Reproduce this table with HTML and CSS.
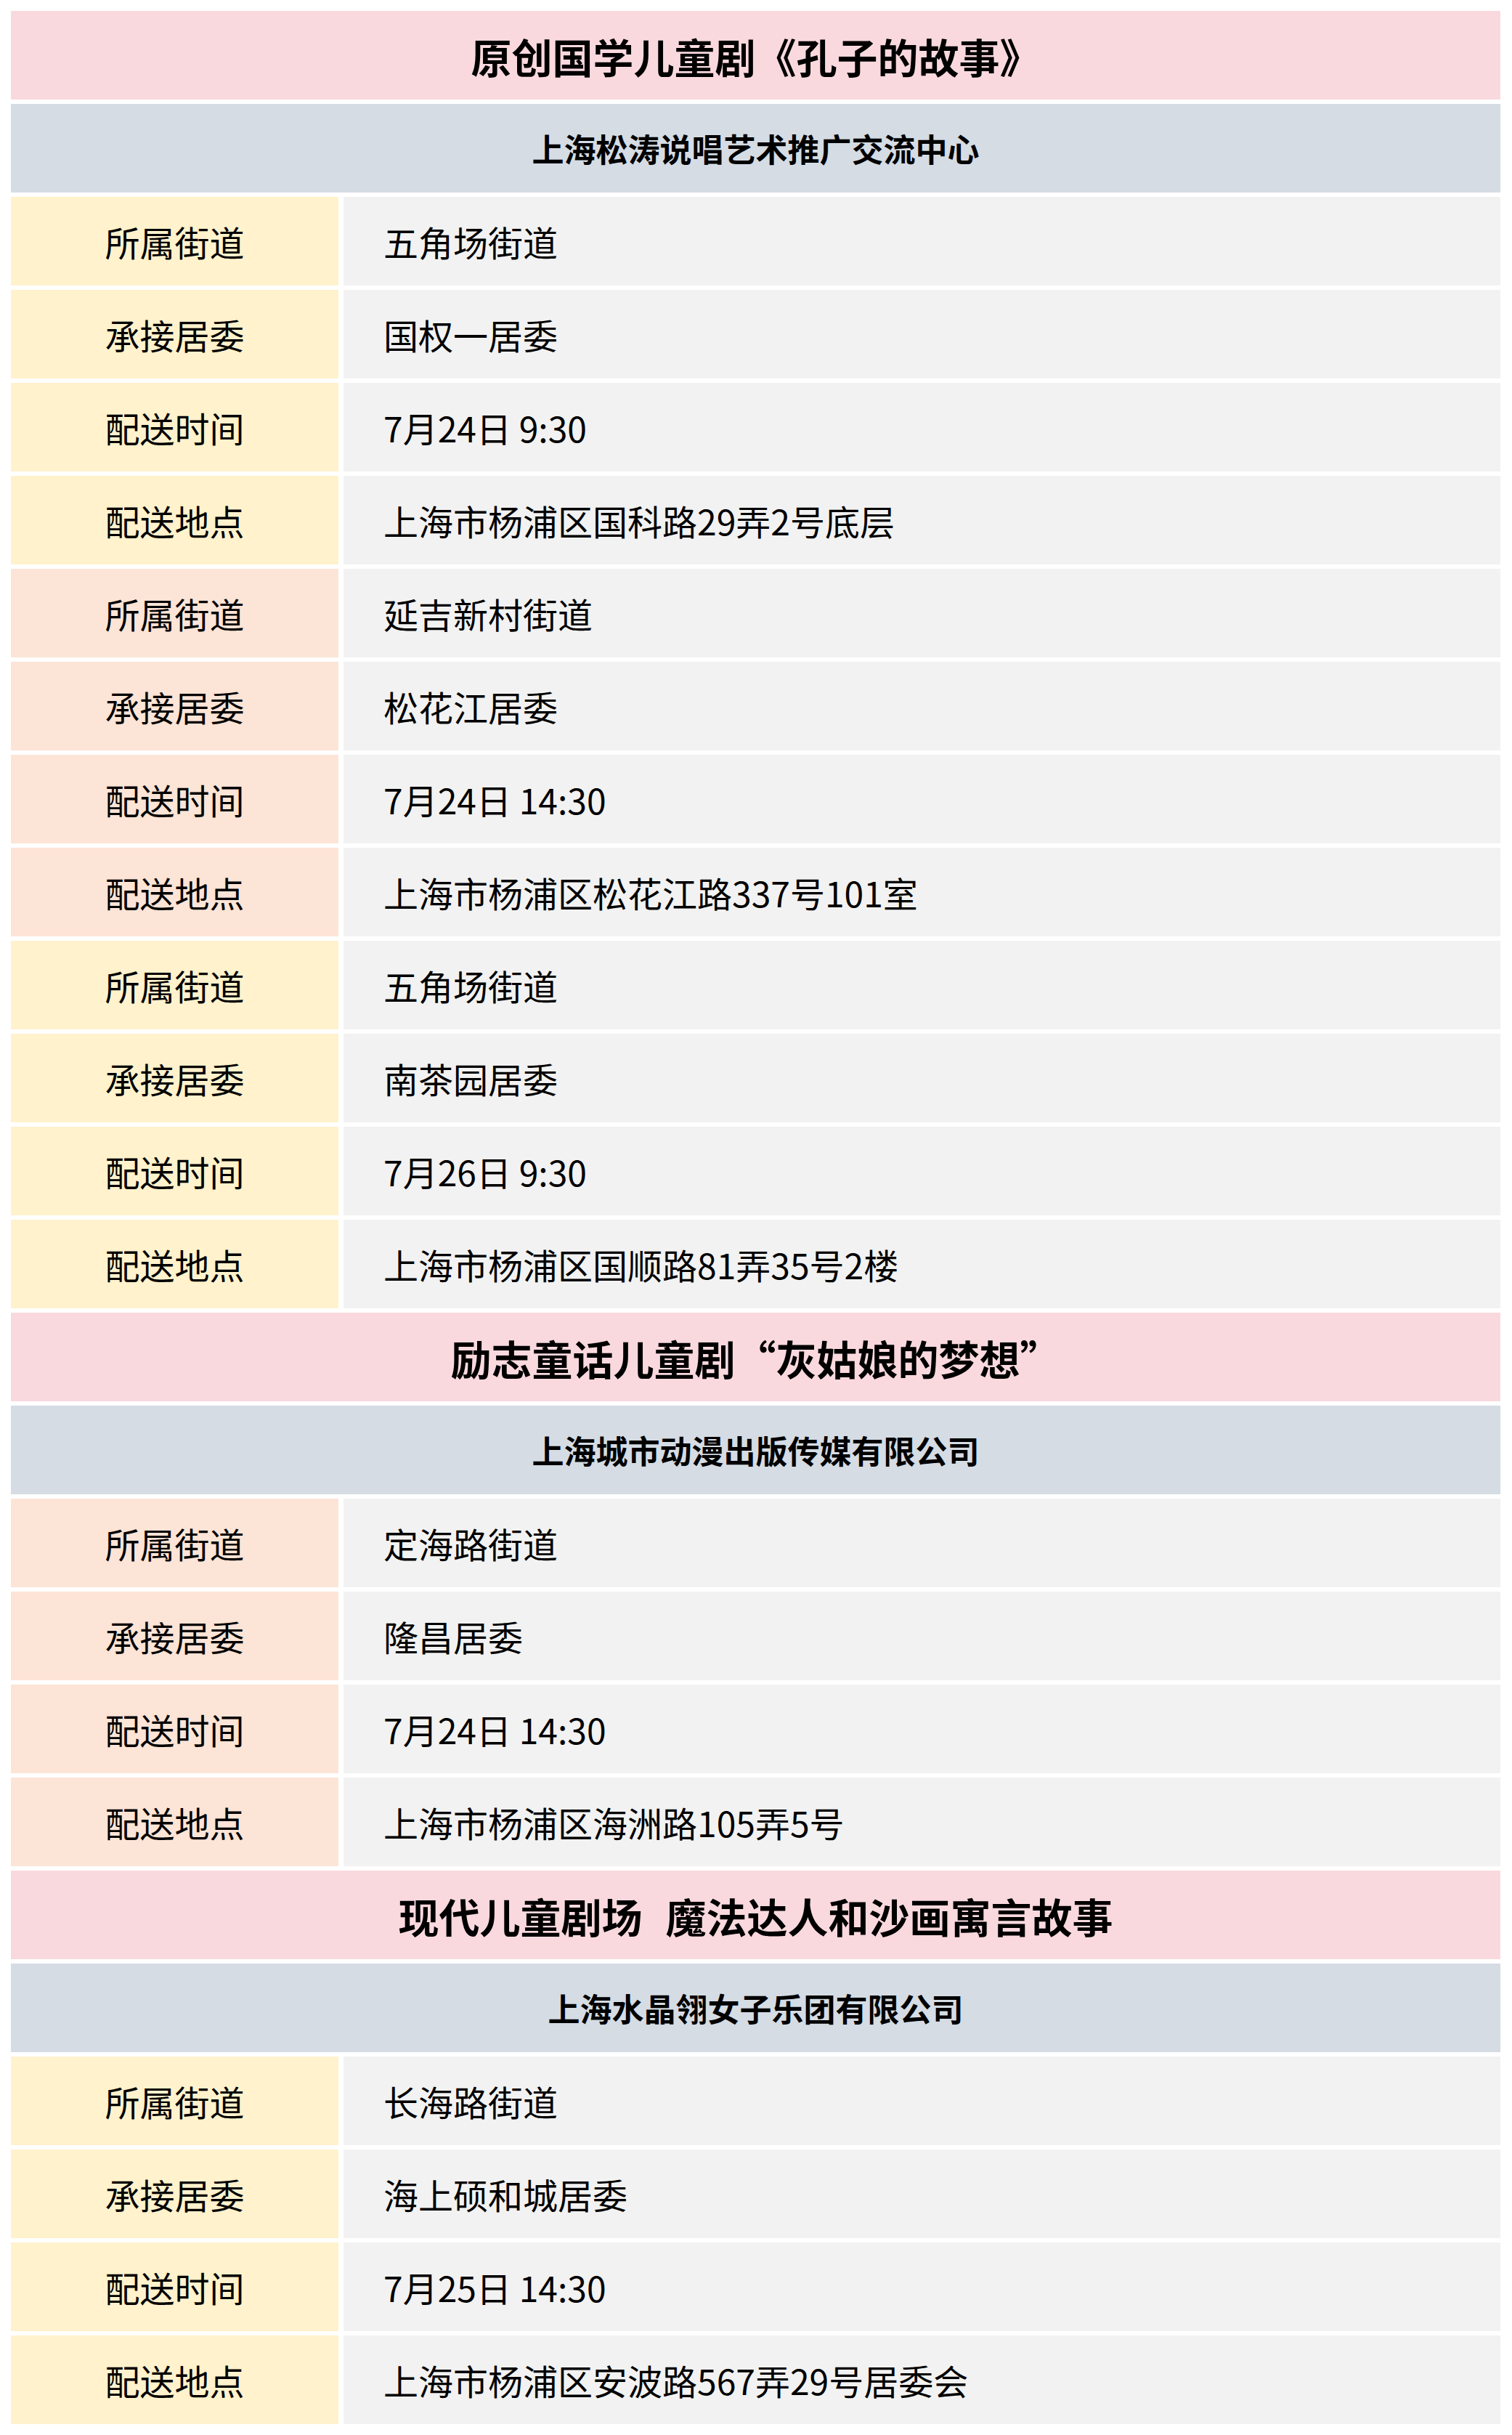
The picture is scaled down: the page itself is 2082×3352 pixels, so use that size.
FILE: index.html
```html
<!DOCTYPE html>
<html lang="zh-CN">
<head>
<meta charset="utf-8">
<title>配送表</title>
<link rel="stylesheet" href="styles.css">
</head>
<body>
<div class="sheet">
  <div class="title span">原创国学儿童剧《孔子的故事》</div>
  <div class="org span">上海松涛说唱艺术推广交流中心</div>

  <div class="label yellow">所属街道</div><div class="value">五角场街道</div>
  <div class="label yellow">承接居委</div><div class="value">国权一居委</div>
  <div class="label yellow">配送时间</div><div class="value">7月24日 9:30</div>
  <div class="label yellow">配送地点</div><div class="value">上海市杨浦区国科路29弄2号底层</div>

  <div class="label peach">所属街道</div><div class="value">延吉新村街道</div>
  <div class="label peach">承接居委</div><div class="value">松花江居委</div>
  <div class="label peach">配送时间</div><div class="value">7月24日 14:30</div>
  <div class="label peach">配送地点</div><div class="value">上海市杨浦区松花江路337号101室</div>

  <div class="label yellow">所属街道</div><div class="value">五角场街道</div>
  <div class="label yellow">承接居委</div><div class="value">南茶园居委</div>
  <div class="label yellow">配送时间</div><div class="value">7月26日 9:30</div>
  <div class="label yellow">配送地点</div><div class="value">上海市杨浦区国顺路81弄35号2楼</div>

  <div class="title span">励志童话儿童剧“灰姑娘的梦想”</div>
  <div class="org span">上海城市动漫出版传媒有限公司</div>

  <div class="label peach">所属街道</div><div class="value">定海路街道</div>
  <div class="label peach">承接居委</div><div class="value">隆昌居委</div>
  <div class="label peach">配送时间</div><div class="value">7月24日 14:30</div>
  <div class="label peach">配送地点</div><div class="value">上海市杨浦区海洲路105弄5号</div>

  <div class="title span">现代儿童剧场<span class="gap"></span>魔法达人和沙画寓言故事</div>
  <div class="org span">上海水晶翎女子乐团有限公司</div>

  <div class="label yellow">所属街道</div><div class="value">长海路街道</div>
  <div class="label yellow">承接居委</div><div class="value">海上硕和城居委</div>
  <div class="label yellow">配送时间</div><div class="value">7月25日 14:30</div>
  <div class="label yellow">配送地点</div><div class="value">上海市杨浦区安波路567弄29号居委会</div>
</div>
</body>
</html>
```

FILE: styles.css
```css
html, body {
  margin: 0;
  padding: 0;
  background: #ffffff;
}

body {
  font-family: "Noto Sans CJK SC", "Noto Sans", sans-serif;
  color: #000000;
}

.sheet {
  display: grid;
  grid-template-columns: 451px 1fr;
  grid-auto-rows: 122px;
  column-gap: 7px;
  row-gap: 6px;
  padding: 15px 16px 15px 15px;
}

.span {
  grid-column: 1 / -1;
}

.title,
.org,
.label,
.value {
  display: flex;
  align-items: center;
  white-space: nowrap;
}

.title {
  justify-content: center;
  background: #f9d9de;
  font-size: 56px;
  font-weight: 700;
}

.gap {
  display: inline-block;
  width: 32px;
}

.org {
  justify-content: center;
  background: #d5dce4;
  font-size: 44px;
  font-weight: 700;
}

.label {
  justify-content: center;
  font-size: 48px;
}

.yellow {
  background: #fff2cc;
}

.peach {
  background: #fce4d6;
}

.value {
  background: #f2f2f2;
  font-size: 48px;
  padding-left: 55px;
}
```
